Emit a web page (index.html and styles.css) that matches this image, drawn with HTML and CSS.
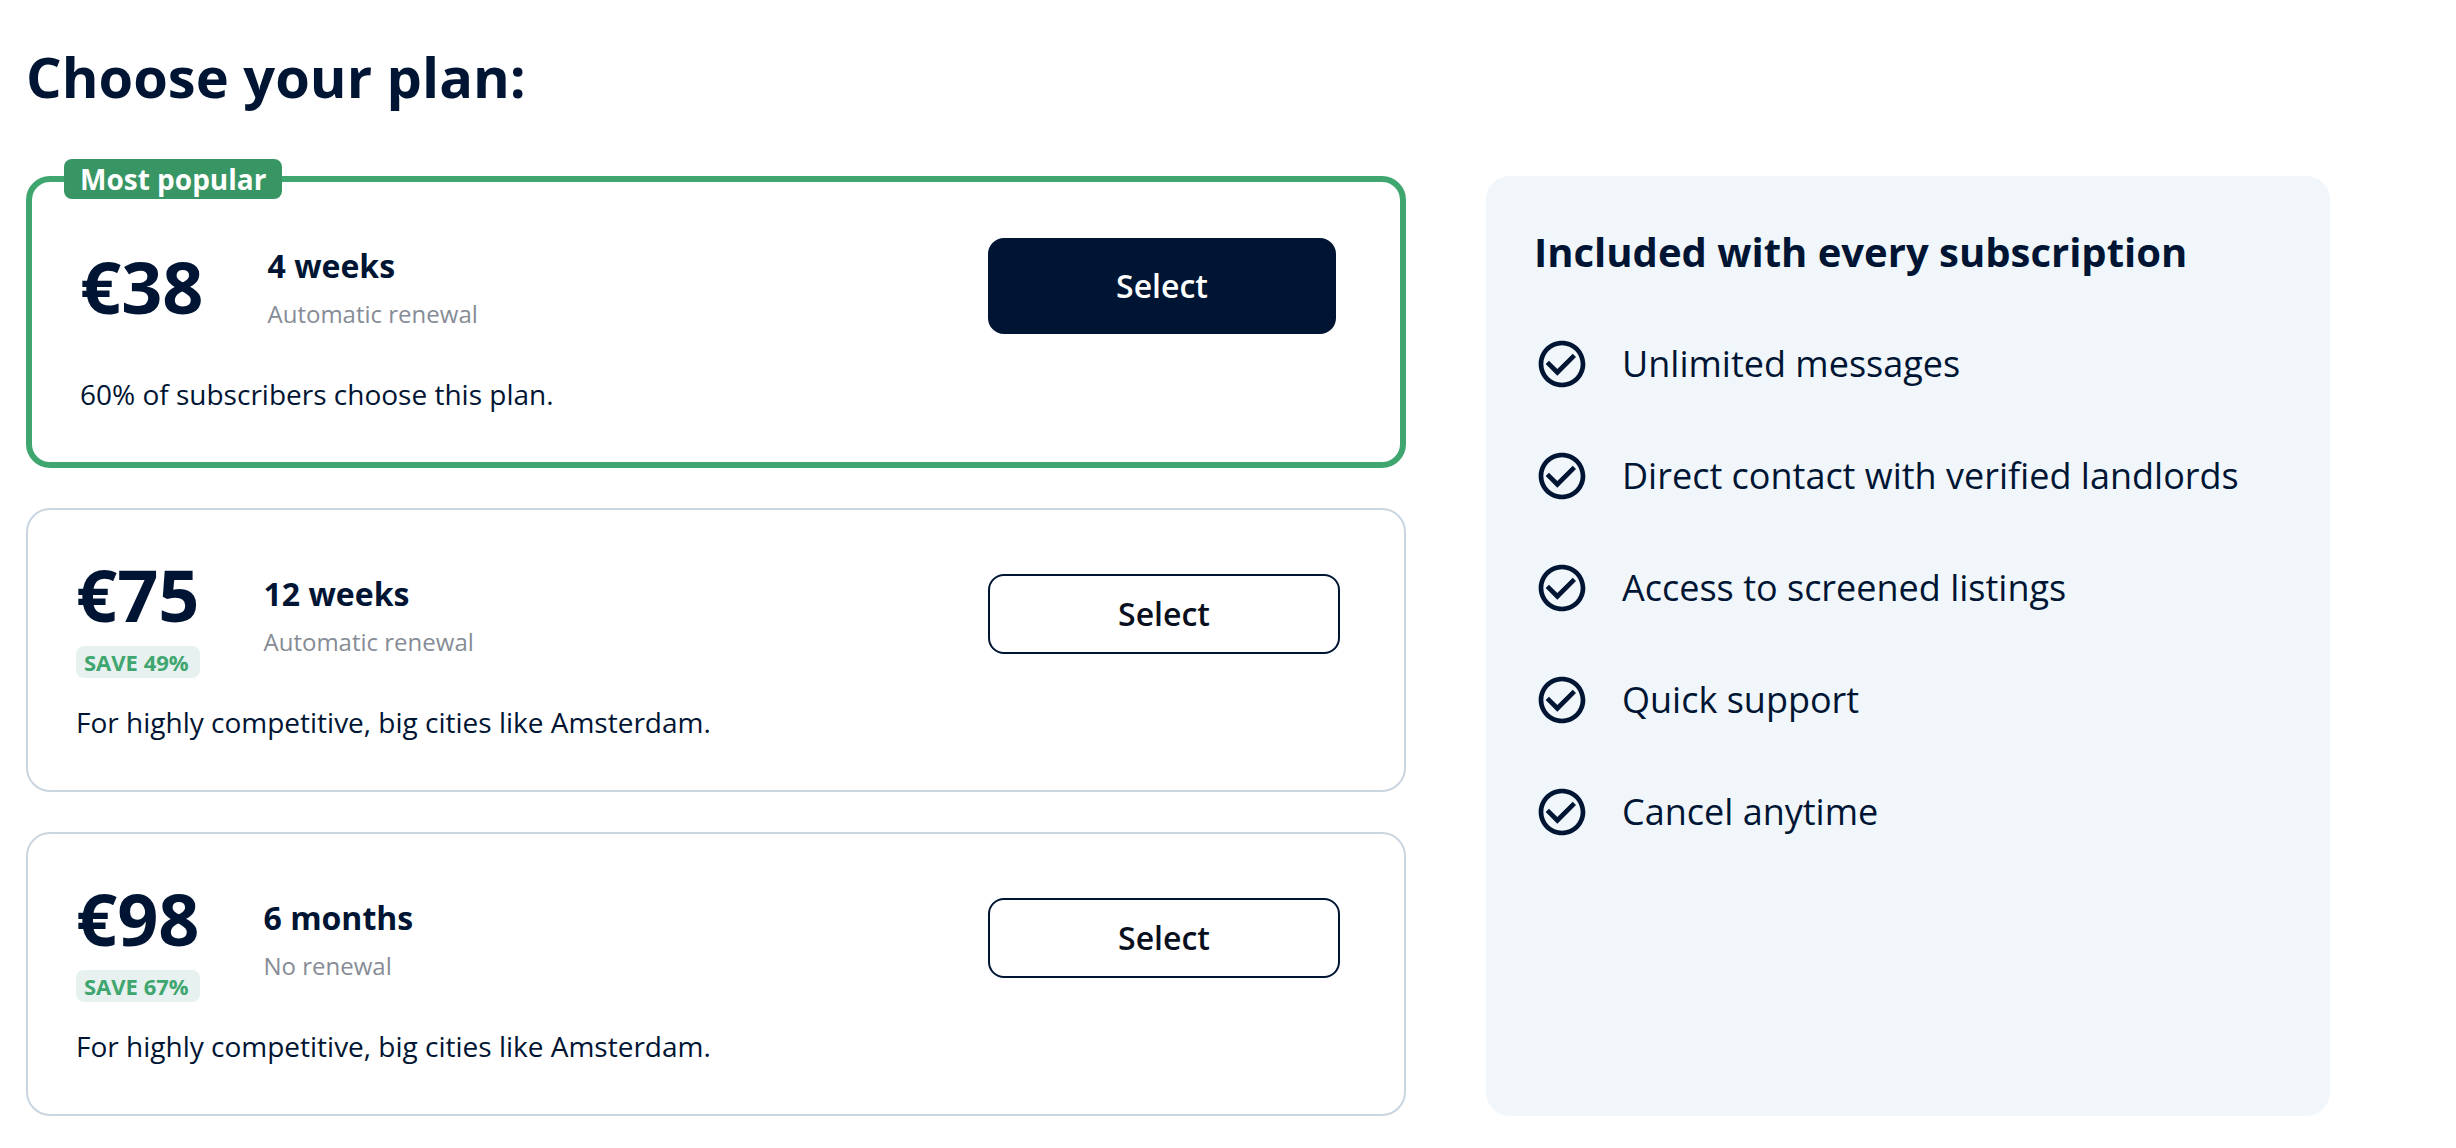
FILE: index.html
```
<!DOCTYPE html>
<html lang="en">

<head>
    <meta charset="UTF-8" />
    <meta name="viewport" content="width=device-width, initial-scale=1.0" />
    <title>Choose your plan</title>
    <link rel="stylesheet" href="styles.css">
</head>

<body>
    <svg class="sprite" aria-hidden="true">
        <symbol id="check" viewBox="0 0 24 24">
            <path d="M16.59 7.58 10 14.17l-3.59-3.58L5 12l5 5 8-8zM12 2C6.48 2 2 6.48 2 12s4.48 10 10 10 10-4.48 10-10S17.52 2 12 2zm0 18c-4.42 0-8-3.58-8-8s3.58-8 8-8 8 3.58 8 8-3.58 8-8 8z" />
        </symbol>
    </svg>

    <main class="page">
        <h1>Choose your plan:</h1>

        <div class="layout">
            <div class="plans">
                <section class="plan popular">
                    <span class="badge">Most popular</span>
                    <div class="plan-row">
                        <div class="plan-info">
                            <div class="price-box">
                                <span class="price">€38</span>
                            </div>
                            <div class="period">
                                <h2>4 weeks</h2>
                                <p class="renewal">Automatic renewal</p>
                            </div>
                        </div>
                        <button type="button" class="select-btn primary">Select</button>
                    </div>
                    <p class="description">60% of subscribers choose this plan.</p>
                </section>

                <section class="plan">
                    <div class="plan-row">
                        <div class="plan-info">
                            <div class="price-box">
                                <span class="price">€75</span>
                                <span class="save">SAVE 49%</span>
                            </div>
                            <div class="period">
                                <h2>12 weeks</h2>
                                <p class="renewal">Automatic renewal</p>
                            </div>
                        </div>
                        <button type="button" class="select-btn">Select</button>
                    </div>
                    <p class="description">For highly competitive, big cities like Amsterdam.</p>
                </section>

                <section class="plan">
                    <div class="plan-row">
                        <div class="plan-info">
                            <div class="price-box">
                                <span class="price">€98</span>
                                <span class="save">SAVE 67%</span>
                            </div>
                            <div class="period">
                                <h2>6 months</h2>
                                <p class="renewal">No renewal</p>
                            </div>
                        </div>
                        <button type="button" class="select-btn">Select</button>
                    </div>
                    <p class="description">For highly competitive, big cities like Amsterdam.</p>
                </section>
            </div>

            <aside class="included">
                <h2>Included with every subscription</h2>
                <ul>
                    <li><svg class="icon" aria-hidden="true"><use href="#check" /></svg>Unlimited messages</li>
                    <li><svg class="icon" aria-hidden="true"><use href="#check" /></svg>Direct contact with verified landlords</li>
                    <li><svg class="icon" aria-hidden="true"><use href="#check" /></svg>Access to screened listings</li>
                    <li><svg class="icon" aria-hidden="true"><use href="#check" /></svg>Quick support</li>
                    <li><svg class="icon" aria-hidden="true"><use href="#check" /></svg>Cancel anytime</li>
                </ul>
            </aside>
        </div>
    </main>
</body>

</html>
```
FILE: styles.css
```
* {
    box-sizing: border-box;
}

body {
    margin: 0;
    background-color: #ffffff;
    font-family: 'Open Sans', 'Noto Sans', sans-serif;
    color: #001533;
}

h1,
h2,
p,
ul {
    margin: 0;
    padding: 0;
}

.sprite {
    display: none;
}

.page {
    padding: 40px 126px 32px 26px;
}

h1 {
    font-size: 56px;
    font-weight: 700;
    line-height: 72px;
    margin-bottom: 64px;
}

.layout {
    display: grid;
    grid-template-columns: 1380fr 844fr;
    gap: 80px;
}

/* plans */
.plans {
    display: flex;
    flex-direction: column;
    gap: 40px;
}

.plan {
    position: relative;
    padding: 40px 64px 48px 48px;
    border: 2px solid #c9d5df;
    border-radius: 24px;
}

.plan.popular {
    border: 6px solid #3fa66f;
}

.badge {
    position: absolute;
    top: -23px;
    left: 32px;
    padding: 0 16px;
    border-radius: 8px;
    background-color: #389664;
    color: #ffffff;
    font-size: 28px;
    font-weight: 700;
    line-height: 40px;
}

.plan-row {
    display: flex;
    align-items: center;
    min-height: 128px;
    margin-bottom: 24px;
}

.plan-info {
    flex: 0 0 calc(50% + 280px);
    display: flex;
    align-items: center;
    gap: 64px;
}

.price-box {
    display: flex;
    flex-direction: column;
    gap: 8px;
}

.price {
    font-size: 72px;
    font-weight: 700;
    line-height: 88px;
}

.save {
    padding: 0 8px;
    border-radius: 8px;
    background-color: #e7f1f0;
    color: #3fa66f;
    font-size: 22px;
    font-weight: 700;
    line-height: 32px;
}

.period {
    display: flex;
    flex-direction: column;
    gap: 6px;
}

.period h2 {
    font-size: 32px;
    font-weight: 700;
    line-height: 50px;
}

.renewal {
    color: #868c96;
    font-size: 24px;
    line-height: 34px;
}

.select-btn {
    flex: 1;
    height: 80px;
    padding: 0 0 2px;
    border: 2px solid #001533;
    border-radius: 16px;
    background-color: #ffffff;
    color: #081020;
    font-family: inherit;
    font-size: 32px;
    font-weight: 600;
    cursor: pointer;
}

.select-btn.primary {
    height: 96px;
    background-color: #001533;
    color: #ffffff;
}

.description {
    font-size: 28px;
    line-height: 40px;
}

/* included panel */
.included {
    padding: 48px;
    border-radius: 24px;
    background-color: #f0f6fa;
}

.included h2 {
    font-size: 40px;
    font-weight: 700;
    line-height: 56px;
    margin-bottom: 56px;
}

.included ul {
    display: flex;
    flex-direction: column;
    gap: 56px;
    list-style: none;
}

.included li {
    display: flex;
    align-items: center;
    gap: 32px;
    font-size: 36px;
    line-height: 56px;
}

.icon {
    flex: none;
    width: 56px;
    height: 56px;
    fill: currentColor;
}
```
